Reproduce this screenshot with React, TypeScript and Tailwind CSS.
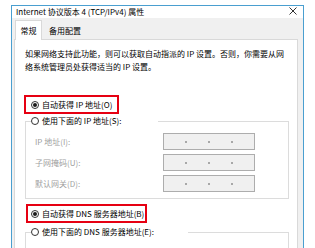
import React from 'react'

const font = { fontFamily: '"Microsoft YaHei", "Noto Sans CJK SC", "Noto Sans", sans-serif' }

function Radio({ checked }: { checked?: boolean }) {
  return (
    <span className="w-[8px] h-[8px] rounded-full border border-[#333] bg-white flex items-center justify-center shrink-0">
      {checked && <span className="w-[4px] h-[4px] rounded-full bg-[#1a1a1a]" />}
    </span>
  )
}

function IpBox() {
  return (
    <div className="w-[92px] h-[17px] bg-[#f0f0f0] border border-[#adadad] flex items-center justify-evenly">
      <span className="w-[2px] h-[2px] bg-[#a8a8a8]" />
      <span className="w-[2px] h-[2px] bg-[#a8a8a8]" />
      <span className="w-[2px] h-[2px] bg-[#a8a8a8]" />
    </div>
  )
}

function Field({ label }: { label: string }) {
  return (
    <div className="flex items-center">
      <span className="w-[128px] text-[#a0a0a0]">{label}</span>
      <IpBox />
    </div>
  )
}

export default function App() {
  return (
    <div className="w-[315px] h-[248px] overflow-hidden bg-white pt-[5px] pl-[11px] text-[8px] leading-[12px] text-black" style={font}>
      <div className="w-[293px] h-[260px] border border-b-0 border-[#4a9fd0] flex flex-col">
        {/* title bar */}
        <div className="h-[21px] flex items-center justify-between pl-[4px] pr-[6px] bg-white">
          <span>Internet 协议版本 4 (TCP/IPv4) 属性</span>
          <svg width="8" height="8" viewBox="0 0 8 8" className="mt-[-2px]">
            <path d="M0.5 0.5L7.5 7.5M7.5 0.5L0.5 7.5" stroke="#333" strokeWidth="1" />
          </svg>
        </div>

        <div className="flex-1 flex flex-col bg-[#f0f0f0] pt-[2px] pl-[2px] pr-[5px]">
          {/* tabs */}
          <div className="flex items-end h-[19px]">
            <div className="ml-[1px] w-[27px] h-[20px] -mb-px relative z-10 bg-white border border-b-0 border-[#d9d9d9] flex items-center justify-center">
              常规
            </div>
            <div className="w-[46px] h-[17px] flex items-center justify-center">备用配置</div>
          </div>

          {/* panel */}
          <div className="flex-1 bg-white border border-[#d9d9d9] pl-[10px] pt-[7px]">
            <p className="leading-[13px]">
              如果网络支持此功能，则可以获取自动指派的 IP 设置。否则，你需要从网
              <br />
              络系统管理员处获得适当的 IP 设置。
            </p>

            <div className="mt-[22px] -ml-px w-[95px] h-[19px] border-2 border-[#e60012] flex items-center gap-[3px] pl-[5px]">
              <Radio checked />
              <span>自动获得 IP 地址(O)</span>
            </div>

            <fieldset className="mt-px w-[264px] border border-[#dcdcdc] pl-[9px] pb-[6px]">
              <legend className="-ml-[4px] w-[127px] bg-white flex items-center gap-[3px] h-[12px]">
                <Radio />
                <span>使用下面的 IP 地址(S):</span>
              </legend>
              <div className="flex flex-col gap-[4px] pt-[6px]">
                <Field label="IP 地址(I):" />
                <Field label="子网掩码(U):" />
                <Field label="默认网关(D):" />
              </div>
            </fieldset>

            <div className="mt-[5px] ml-px w-[121px] h-[19px] border-2 border-[#e60012] flex items-center gap-[3px] pl-[3px]">
              <Radio checked />
              <span>自动获得 DNS 服务器地址(B)</span>
            </div>

            <fieldset className="mt-[3px] w-[264px] h-[40px] border border-[#dcdcdc] pl-[9px]">
              <legend className="-ml-[4px] w-[157px] bg-white flex items-center gap-[3px] h-[12px]">
                <Radio />
                <span>使用下面的 DNS 服务器地址(E):</span>
              </legend>
            </fieldset>
          </div>
        </div>
      </div>
    </div>
  )
}
